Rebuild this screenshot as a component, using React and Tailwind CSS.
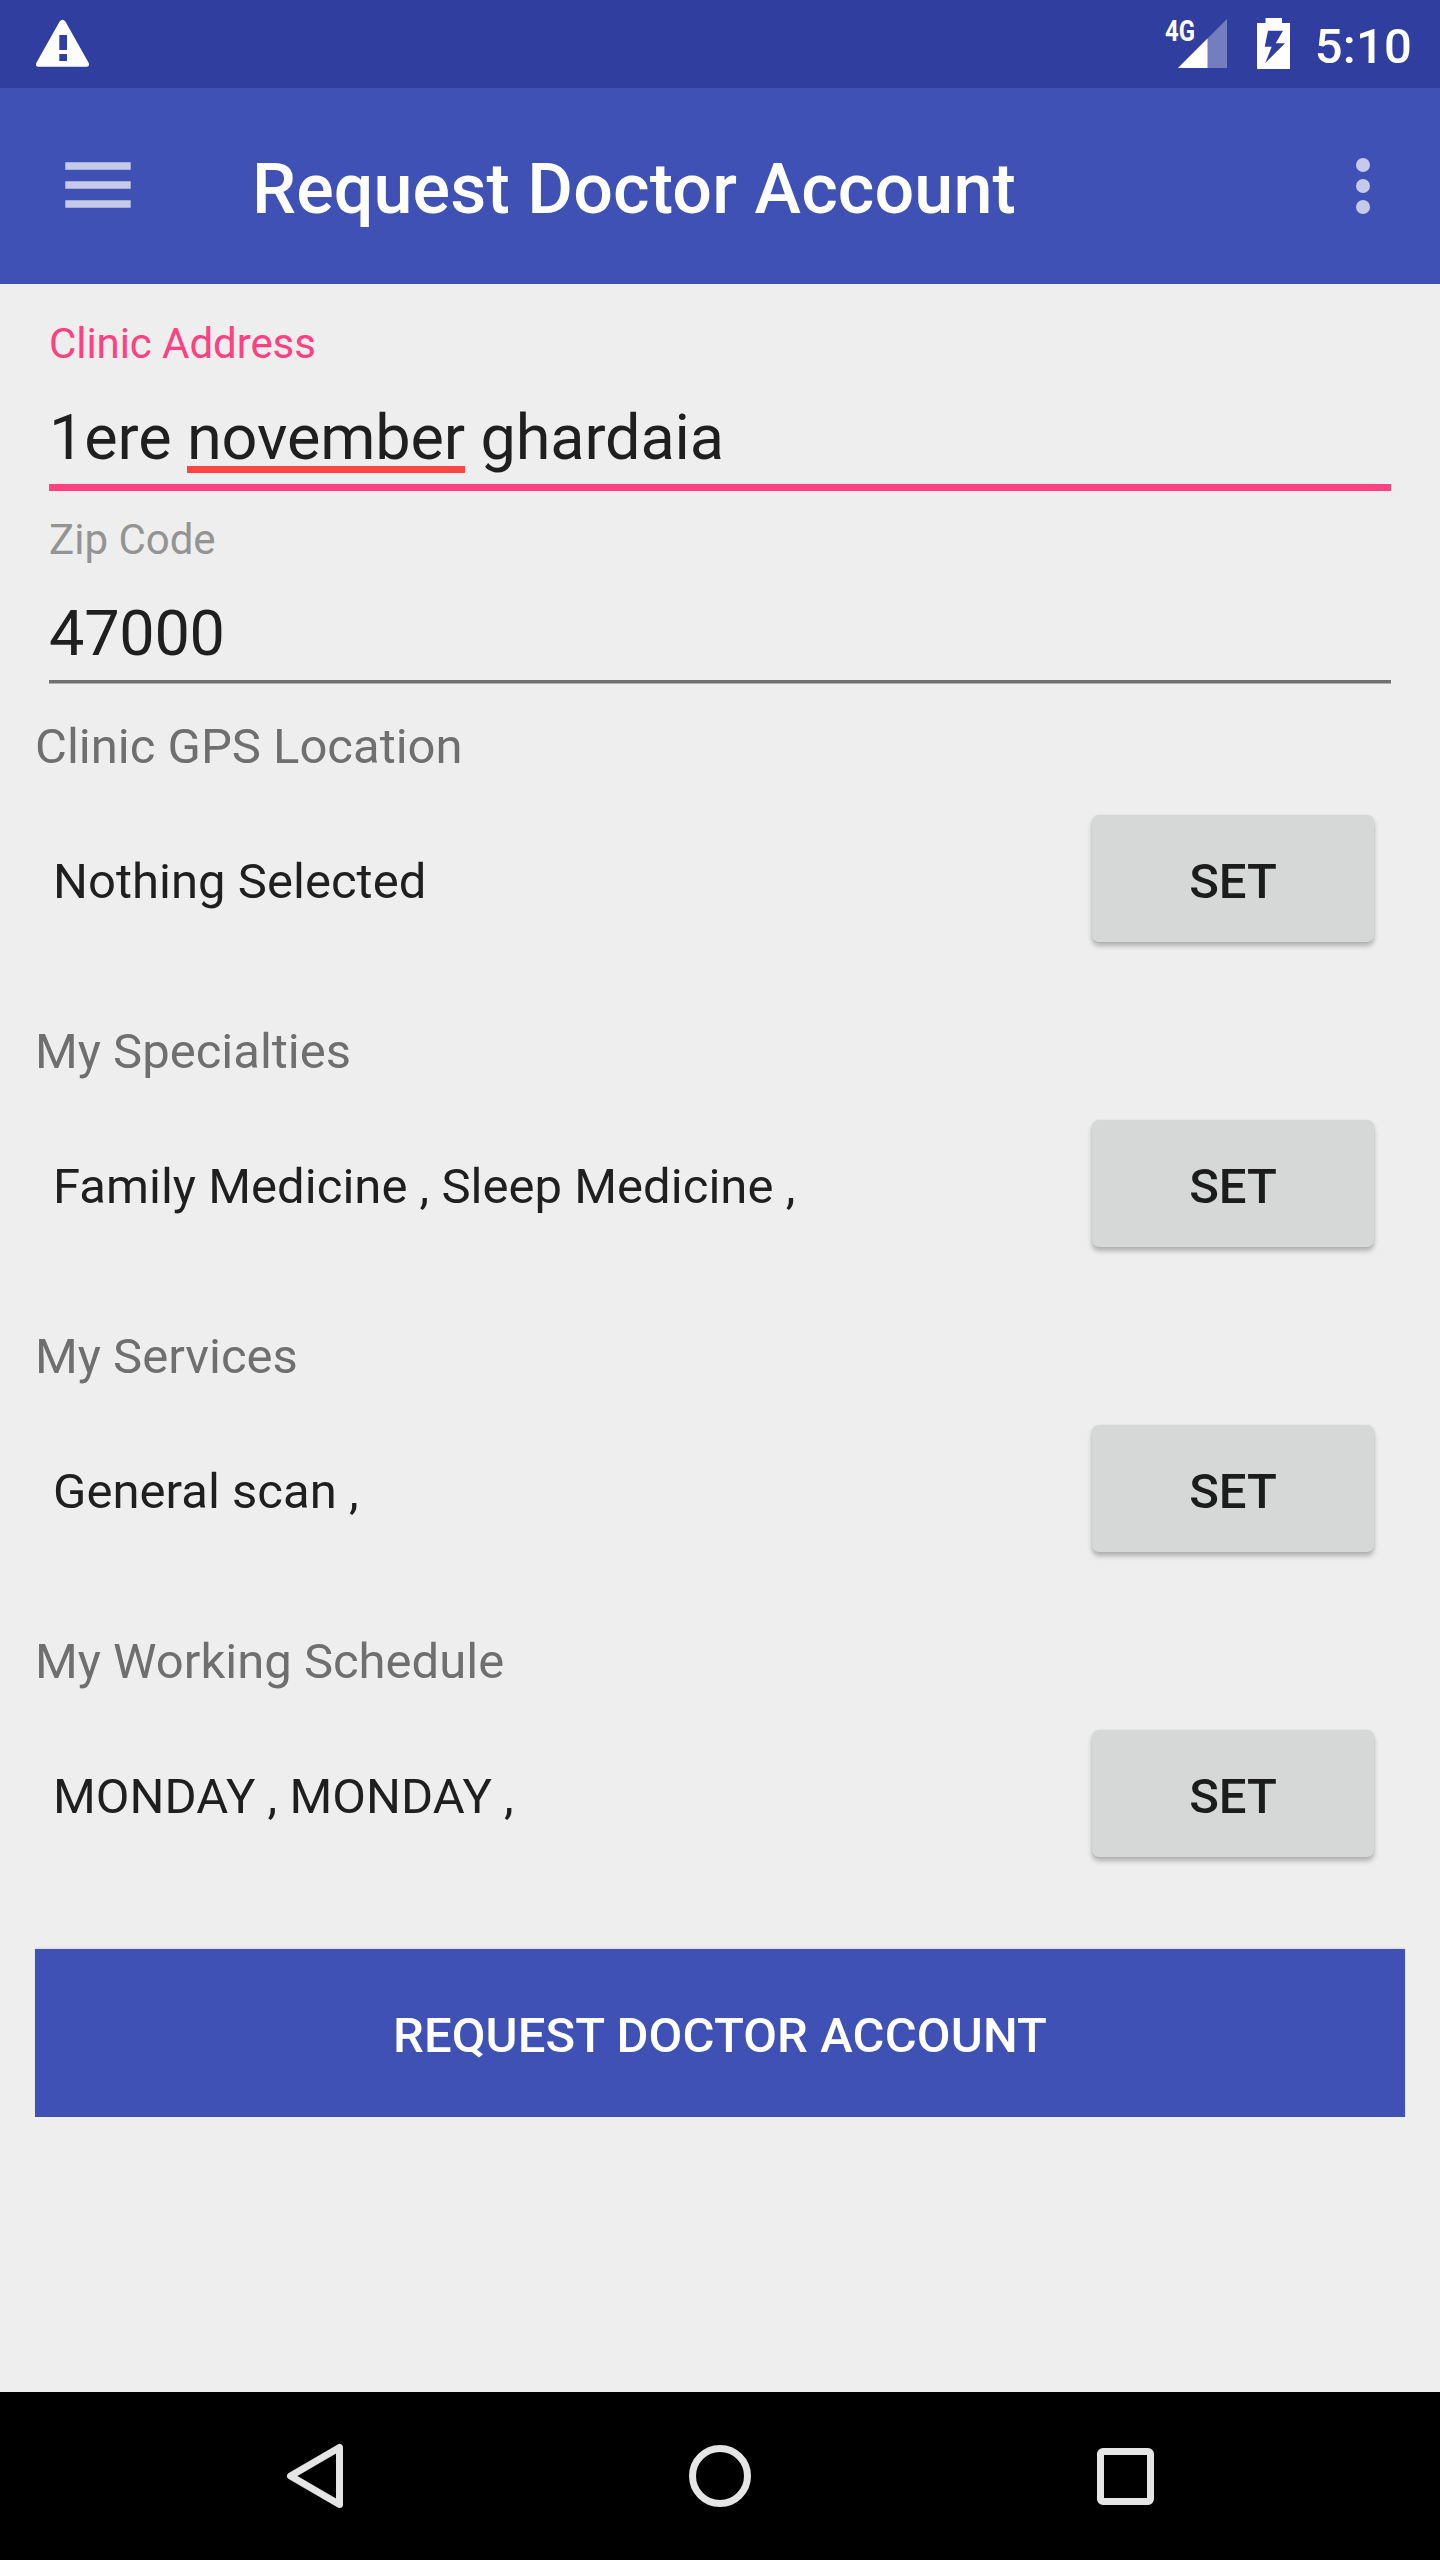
const SECTIONS = [
  { title: 'Clinic GPS Location', value: 'Nothing Selected' },
  { title: 'My Specialties', value: 'Family Medicine , Sleep Medicine ,' },
  { title: 'My Services', value: 'General scan ,' },
  { title: 'My Working Schedule', value: 'MONDAY , MONDAY ,' },
];

function StatusBar() {
  return (
    <div className="flex h-[88px] items-start justify-between bg-[#303f9f] pl-[36px] pr-[28px] text-white">
      <svg className="mt-[19px] h-[49px] w-[54px]" viewBox="0 0 54 49" fill="currentColor">
        <path
          fillRule="evenodd"
          d="M23.6 2.6Q26.5-1.200 29.400 2.600L52.700 44Q54 47.600 51 47.700H2Q-1 47.600 .3 44ZM23.300 16V31H31V16ZM23.300 35V42H31V35Z"
        />
      </svg>
      <div className="flex items-start">
        <svg className="mt-[6px] h-[64px] w-[68px]" viewBox="-4 -10 68 64" fill="currentColor">
          <path d="M15 52L64 3V52Z" opacity="0.33" />
          <path d="M15 52L44.500 22.500V52Z" />
          <text x="2" y="25" fontFamily="Roboto" fontWeight="700" fontSize="29" textLength="30" lengthAdjust="spacingAndGlyphs">
            4G
          </text>
        </svg>
        <svg className="ml-[30px] mt-[18px] h-[51px] w-[33px]" viewBox="0 0 33 51" fill="currentColor">
          <path
            fillRule="evenodd"
            d="M8.500 0H25V5H33V51H0V5H8.500ZM11 12.700L7.700 28.700H14.700L8.300 45L28 25.300H18.700L26 12.700Z"
          />
        </svg>
        <span className="ml-[25px] mt-[18px] text-[49px] font-medium leading-[58px] tracking-[0.2px]">5:10</span>
      </div>
    </div>
  );
}

function Toolbar() {
  return (
    <div className="flex h-[196px] items-center justify-between bg-[#3f51b5] pl-[65px] pr-[70px]">
      <div className="flex items-center">
        <svg className="mb-[3px] h-[46px] w-[66px]" viewBox="0 0 66 46" fill="#c5cae9">
          <path d="M.3 .2H65.700V7.800H.3ZM.3 19.200H65.700V26.800H.3ZM.3 38.200H65.700V45.800H.3Z" />
        </svg>
        <h1 className="ml-[121px] pt-[6px] text-[70px] font-medium leading-[82px] tracking-[0.13px] text-white">Request Doctor Account</h1>
      </div>
      <div className="flex flex-col gap-[7px]">
        <span className="size-[14px] rounded-full bg-[#c5cae9]" />
        <span className="size-[14px] rounded-full bg-[#c5cae9]" />
        <span className="size-[14px] rounded-full bg-[#c5cae9]" />
      </div>
    </div>
  );
}

function Section({ title, value }) {
  return (
    <section className="h-[305px] px-[35px] pt-px">
      <h2 className="text-[49px] leading-[58px] text-[#6f6f6f]">{title}</h2>
      <div className="mt-[39px] flex h-[127px] items-center justify-between pl-[18px] pr-[31px]">
        <span className="pt-[6px] text-[49px] leading-[58px] tracking-[0.03px] text-[#1f1f1f]">{value}</span>
        <button className="h-[127px] w-[282px] rounded-[7px] bg-[#d6d7d7] pt-[6px] text-[49px] font-medium leading-[58px] text-[#1c1c1c] shadow-[0_4px_5px_rgba(0,0,0,0.26),0_0_2px_rgba(0,0,0,0.08)]">
          SET
        </button>
      </div>
    </section>
  );
}

function NavBar() {
  return (
    <div className="flex h-[168px] items-center justify-between bg-black pl-[286px] pr-[286px]">
      <svg className="h-[66px] w-[57px]" viewBox="0 0 57 66" fill="none" stroke="#e5e5e5" strokeWidth="7" strokeLinejoin="round">
        <path d="M53.500 4.500V61.500L4.500 33Z" />
      </svg>
      <span className="size-[62px] rounded-full border-[7px] border-[#e5e5e5]" />
      <span className="size-[57px] rounded-[6px] border-[7px] border-[#e5e5e5]" />
    </div>
  );
}

export default function App() {
  return (
    <div className="flex h-[2560px] w-[1440px] flex-col overflow-hidden bg-[#eeeeee] font-['Roboto',sans-serif]">
      <StatusBar />
      <Toolbar />
      <main className="flex-1">
        <div className="px-[49px] pt-[35px]">
          <div className="text-[42px] leading-[49px] tracking-[-0.07px] text-[#ff4081]">Clinic Address</div>
          <div className="mt-[33px] text-[63px] leading-[74px] tracking-[-0.14px] text-[#1f1f1f]">
            1ere{' '}
            <span className="relative">
              november
              <span className="absolute bottom-[1px] left-0 h-[7px] w-full bg-[#ff4444]" />
            </span>{' '}
            ghardaia
          </div>
          <div className="mt-[9px] h-[7px] bg-[#ff4081]" />
          <div className="mt-[24px] text-[42px] leading-[49px] text-[#949494]">Zip Code</div>
          <div className="mt-[33px] text-[63px] leading-[74px] tracking-[-0.28px] text-[#1f1f1f]">47000</div>
          <div className="mt-[9px] h-[4px] border-b border-[#aeaeae] bg-[#6f706f]" />
        </div>
        <div className="mt-[33px]">
          {SECTIONS.map((section) => (
            <Section key={section.title} {...section} />
          ))}
        </div>
        <div className="px-[35px] pt-[12px]">
          <button className="h-[168px] w-full bg-[#3f51b5] pt-[6px] text-[49px] font-medium leading-[58px] tracking-[0.12px] text-white shadow-[0_-1px_2px_rgba(0,0,0,0.1)]">
            REQUEST DOCTOR ACCOUNT
          </button>
        </div>
      </main>
      <NavBar />
    </div>
  );
}
